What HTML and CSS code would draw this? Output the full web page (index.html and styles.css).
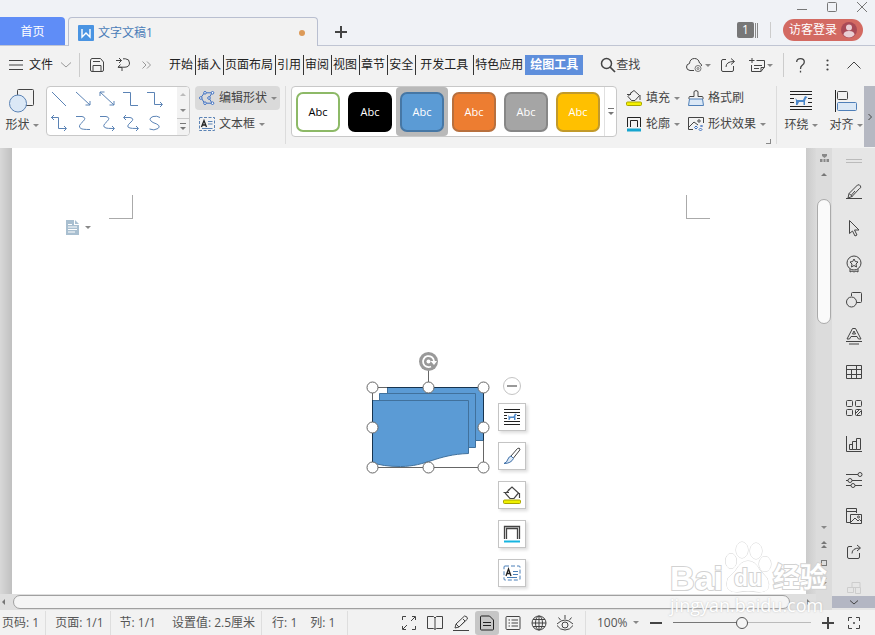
FILE: index.html
```html
<!DOCTYPE html>
<html lang="zh-CN">
<head>
<meta charset="utf-8">
<title>文字文稿1</title>
<link rel="stylesheet" href="styles.css">
</head>
<body>
<div class="app">

<header class="titlebar">
  <nav class="tabs">
    <button class="tab-home">首页</button>
    <button class="tab-doc">
      <svg class="logo" width="16" height="16" viewBox="0 0 16 16"><rect width="16" height="16" rx="1" fill="#4a94e2"/><path d="M4 4v8l4-4 4 4V4" fill="none" stroke="#fff" stroke-width="1.4"/></svg>
      <span>文字文稿1</span><i class="dot"></i>
    </button>
    <button class="new-tab" aria-label="新建"><svg width="12" height="12" viewBox="0 0 12 12"><path d="M6 0v12M0 6h12" stroke-width="2"/></svg></button>
  </nav>
  <div class="title-right">
    <div class="window-buttons">
      <button aria-label="最小化"><svg width="10" height="10" viewBox="0 0 10 10"><path d="M0 7.500h10"/></svg></button>
      <button aria-label="最大化"><svg width="10" height="10" viewBox="0 0 10 10"><rect x=".5" y=".5" width="9" height="9" rx="1"/></svg></button>
      <button aria-label="关闭"><svg width="10" height="10" viewBox="0 0 10 10"><path d="M0 0l10 10M10 0L0 10"/></svg></button>
    </div>
    <div class="account">
      <span class="count">1</span><i class="bars"></i><i class="sep"></i>
      <button class="login">访客登录
        <svg width="16" height="16" viewBox="0 0 16 16"><circle cx="8" cy="8" r="8" fill="#a94a56"/><circle cx="8" cy="5.500" r="3" fill="#e9cfd4"/><path d="M2.500 13q0-4 5.500-4t5.500 4q-5.500 5-11 0z" fill="#e9cfd4"/></svg>
      </button>
    </div>
  </div>
</header>

<div class="menubar">
  <button class="file"><svg width="14" height="10" viewBox="0 0 14 10"><path d="M0 .5h14M0 5h14M0 9.500h14"/></svg>文件<svg class="light" width="10" height="6" viewBox="0 0 10 6"><path d="M0 .5l5 4.500 5-4.500"/></svg></button>
  <i class="sep tall"></i>
  <div class="quick">
    <button aria-label="保存"><svg width="14" height="14" viewBox="0 0 14 14"><path d="M.5 3V12q0 1.500 1.500 1.500h10q1.500 0 1.500-1.500V4L10.500.5H2Q.5.5.5 3M3 13V7.500h8V13M3 3.500h7"/></svg></button>
    <button aria-label="撤销"><svg width="14" height="14" viewBox="0 0 14 14"><path d="M0 2.500h5.500M3 0l2.500 2.500L3 5M7 .8h2.500Q13.500 1 13.500 5T9 9.200H2M4.500 6.500L2 9.200l4 .3V13"/></svg></button>
    <button class="light" aria-label="更多"><svg width="9" height="8" viewBox="0 0 9 8"><path d="M.5.5L4 4 .5 7.500M5 .5L8.500 4 5 7.500"/></svg></button>
  </div>
  <nav class="menu">
    <button>开始</button><button>插入</button><button>页面布局</button><button>引用</button><button>审阅</button><button>视图</button><button>章节</button><button>安全</button><button class="dev">开发工具</button><button class="last">特色应用</button><button class="active">绘图工具</button>
  </nav>
  <button class="find"><svg width="16" height="16" viewBox="0 0 16 16"><circle cx="6.500" cy="6.500" r="5" stroke-width="1.500"/><path d="M10 10l5 5" stroke-width="1.700"/></svg>查找</button>
  <div class="menu-right">
    <button aria-label="云同步"><svg width="17" height="14" viewBox="0 0 17 14"><path d="M8 12.500H4Q.5 12 .5 9q0-3 3-3.500Q4 .5 8.500.5q4 0 5 4.500Q16 6 15.500 8"/><circle cx="12" cy="10.500" r="3" stroke="#777"/><circle cx="12" cy="10.500" r="1" stroke="#777"/></svg><i class="caret"></i></button>
    <button aria-label="分享"><svg width="14" height="14" viewBox="0 0 14 14"><path d="M5 1.500H2Q.5 1.500.5 3v9q0 1.500 1.500 1.500h9q1.500 0 1.500-1.500V8M5 9q0-5.500 8-5.500M10 .5l3.500 3L10 6.500"/></svg></button>
    <button class="note" aria-label="批注"><svg width="16" height="14" viewBox="0 0 16 14"><path d="M3 0v5M0 2.500h5.500M7.500 2.500H15.500V9L12 13.500H2.500V7M5 7.500h8M5 10.500h5M15.500 9.500H12v4"/></svg><i class="caret"></i></button>
    <i class="sep tall"></i>
    <button class="help" aria-label="帮助"><svg width="9" height="15" viewBox="0 0 9 15"><path d="M.7 4Q.7.7 4.500.7T8.300 4Q8.300 6 6 7.500 4.500 8.500 4.500 11M4.500 12.800v1.700" stroke-width="1.300"/></svg></button>
    <button aria-label="更多选项"><svg width="3" height="12" viewBox="0 0 3 12" class="solid"><circle cx="1.500" cy="1.500" r="1.100"/><circle cx="1.500" cy="6" r="1.100"/><circle cx="1.500" cy="10.500" r="1.100"/></svg></button>
    <button aria-label="收起"><svg width="14" height="8" viewBox="0 0 14 8"><path d="M.5 7.500L7 1l6.500 6.500"/></svg></button>
  </div>
</div>

<section class="ribbon">
  <button class="big">
    <svg width="26" height="24" viewBox="0 0 26 24"><rect x="8.500" y=".5" width="16" height="16" rx="1"/><circle cx="9" cy="14.500" r="8.500" fill="#dbe8f6" stroke="#5b83b5"/></svg>
    <span>形状<i class="caret"></i></span>
  </button>
  <div class="lines">
    <div class="line-grid">
      <button aria-label="直线"><svg width="16" height="16" viewBox="0 0 16 16"><path d="M1 1l14 14"/></svg></button>
      <button aria-label="箭头"><svg width="16" height="16" viewBox="0 0 16 16"><path d="M1 1l14 13M15 10v4h-4.500"/></svg></button>
      <button aria-label="双箭头"><svg width="16" height="16" viewBox="0 0 16 16"><path d="M1 1l14 13M15 10v4h-4.500M1 5V1h4.500"/></svg></button>
      <button aria-label="肘形"><svg width="16" height="16" viewBox="0 0 16 16"><path d="M0 1.500h7.500v13H15"/></svg></button>
      <button aria-label="肘形箭头"><svg width="16" height="16" viewBox="0 0 16 16"><path d="M0 1.500h7.500v12H15M13 11l2.500 2.500L13 16"/></svg></button>
      <button aria-label="肘形双箭头"><svg width="16" height="16" viewBox="0 0 16 16"><path d="M0 2.500h7.500v11H15M13 11l2.500 2.500L13 16M3 0L.5 2.500 3 5"/></svg></button>
      <button aria-label="曲线"><svg width="16" height="16" viewBox="0 0 16 16"><path d="M1 1.500h6q5 1 1 5-6 5-2 7 1 1 9 1"/></svg></button>
      <button aria-label="曲线箭头"><svg width="16" height="16" viewBox="0 0 16 16"><path d="M1 1.500h6q5 1 1 5-6 5-1 6.500 1 .5 8 .5M13 11l2.500 2.500L13 16"/></svg></button>
      <button aria-label="曲线双箭头"><svg width="16" height="16" viewBox="0 0 16 16"><path d="M1 2.500h6q5 1 1 4.500-6 5-1 6 1 .5 8 .5M13 11l2.500 2.500L13 16M3 0L.5 2.500 3 5"/></svg></button>
      <button aria-label="自由曲线"><svg width="16" height="16" viewBox="0 0 16 16"><path d="M13 2.500Q10 .5 6 1.500 0 4 6 7.500q9 3 5 6-4 2.500-8.500.5"/></svg></button>
    </div>
    <div class="spin"><button aria-label="上一行"><i class="caret up pale"></i></button><button aria-label="下一行"><i class="caret"></i></button><button aria-label="展开"><i class="expand"></i></button></div>
  </div>
  <div class="stack edit">
    <button class="cmd on"><svg width="16" height="14" viewBox="0 0 16 14"><path d="M6 1L2 6.500 6 13M6 1.800h7L10 7l3 5.200H6" stroke="#3d6fc0"/><g fill="#fff" stroke="#3d6fc0"><circle cx="6" cy="1.800" r="1.300"/><circle cx="1.800" cy="7" r="1.300"/><circle cx="6" cy="12.200" r="1.300"/><circle cx="13.500" cy="1.800" r="1.300"/><circle cx="10" cy="7" r="1.300"/><circle cx="13.500" cy="12.200" r="1.300"/></g></svg>编辑形状<i class="caret"></i></button>
    <button class="cmd"><svg width="16" height="14" viewBox="0 0 16 14"><rect x=".5" y=".5" width="15" height="13" stroke="#5b83b5" stroke-dasharray="3 1.500"/><path d="M2.500 10L5 3.500 7.500 10M3.500 8h3" stroke="#222" stroke-width="1.300"/><path d="M9 4.500h4.500M9 7h4.500M3 11.500h10.500" stroke="#5b83b5"/></svg>文本框<i class="caret"></i></button>
  </div>
  <i class="rule"></i>
  <div class="styles">
    <button class="cell"><span class="swatch white">Abc</span></button>
    <button class="cell"><span class="swatch black">Abc</span></button>
    <button class="cell sel"><span class="swatch blue">Abc</span></button>
    <button class="cell"><span class="swatch orange">Abc</span></button>
    <button class="cell"><span class="swatch gray">Abc</span></button>
    <button class="cell"><span class="swatch gold">Abc</span></button>
    <button class="style-more" aria-label="更多样式"><i class="expand"></i></button>
  </div>
  <div class="stack fill">
    <button class="cmd"><svg width="16" height="16" viewBox="0 0 16 16"><path d="M4 3.500L8 .5l5.500 5L9 10.500H5.500L2 6.500 6 2M1 4.500h4M14 5v5"/><rect x=".5" y="12" width="15" height="3.500" rx="1" fill="#f4f000" stroke="#a8a400"/></svg>填充<i class="caret"></i></button>
    <button class="cmd"><svg width="16" height="16" viewBox="0 0 16 16"><path d="M1.500 11V1.500h13V11M4.500 11V4.500h7V11" stroke="#222"/><path d="M1 14h14" stroke="#16a5cf" stroke-width="3"/></svg>轮廓<i class="caret"></i></button>
  </div>
  <div class="stack effect">
    <button class="cmd"><svg width="16" height="16" viewBox="0 0 16 16"><path d="M1 9V7.500q0-1 1-1h4V1.500Q8-.5 10 1.500v5h4q1 0 1 1V9"/><path d="M1.500 9h13l1 6.500H.5z" fill="#dbe8f6" stroke="#4f7fb8"/></svg>格式刷</button>
    <button class="cmd"><svg width="16" height="16" viewBox="0 0 16 16"><path d="M5 13.500H.5V1.500h15V7M1 11l5-5 4 3"/><circle cx="11" cy="5" r="1.200"/><g stroke="#3d6fc0"><path d="M8 10l1.500 1.500L8 13l-1.500-1.500zM13.500 9l1 1-1 1-1-1zM12.500 12l1.500 1.500-1.500 1.500L11 13.500z"/></g></svg>形状效果<i class="caret"></i></button>
  </div>
  <button class="launcher" aria-label="形状格式"></button>
  <i class="rule end"></i>
  <button class="big wrap">
    <svg width="24" height="24" viewBox="0 0 24 24"><path d="M1 2.500h22M1 5.500h22M1 9.500h4M19 9.500h4M1 13.500h4M19 13.500h4M1 17.500h22M1 20.500h22" stroke="#222"/><path d="M6.500 9l1.500 2h6l2-4 2.500 1-1.500 1.500-1 2.500v4h-1.500v-3H10L8.500 16H7v-4z" fill="#4a86c8" stroke="none"/></svg>
    <span>环绕<i class="caret"></i></span>
  </button>
  <button class="big align">
    <svg width="24" height="24" viewBox="0 0 24 24"><path d="M1.500 1v22" stroke="#222"/><rect x="3.500" y="2.500" width="10" height="8" rx="1"/><rect x="3.500" y="13.500" width="19" height="8" rx="1" fill="#dbe8f6" stroke="#4f7fb8"/></svg>
    <span>对齐<i class="caret"></i></span>
  </button>
  <button class="ribbon-next" aria-label="向右滚动"><svg width="4" height="8" viewBox="0 0 4 8"><path d="M.5 1L3.500 4 .5 7"/></svg></button>
</section>

<main class="work">
  <div class="editor">
    <div class="view">
      <article class="page">
        <div class="margins"><i class="mark left"></i><i class="mark right"></i></div>
        <button class="doc-tag" aria-label="段落布局"><svg width="14" height="15" viewBox="0 0 14 15"><path d="M0 0h8v5h5v10H0zM9 0l4 4H9z" fill="#a9bfd0"/><path d="M2 4.500h4M2 7h9M2 9.500h9M2 12h7" stroke="#fff"/></svg><i class="caret"></i></button>
        <svg class="shape" width="126" height="126" viewBox="0 0 126 126">
          <g fill="#5b9bd5" stroke="#41719c">
            <path d="M22.500 37.500h96v53h-16v-40h-80z"/>
            <path d="M14.500 43.500h96v54h-16v-40h-80z"/>
            <path d="M7.500 50.500h96v53c-32 1-42 13-68 13q-18 0-28-4z"/>
          </g>
          <path d="M7.500 37.500h111v80H7.500zM63.500 20v17" fill="none" stroke="#666"/>
          <path d="M22 37.500h96.500v53M7.500 50v62" fill="none" stroke="#17344f"/>
          <g fill="#fff" stroke="#666"><circle cx="7.500" cy="37.500" r="5.500"/><circle cx="63.500" cy="37.500" r="5.500"/><circle cx="118.500" cy="37.500" r="5.500"/><circle cx="7.500" cy="77.500" r="5.500"/><circle cx="118.500" cy="77.500" r="5.500"/><circle cx="7.500" cy="117.500" r="5.500"/><circle cx="63.500" cy="117.500" r="5.500"/><circle cx="118.500" cy="117.500" r="5.500"/></g>
          <g stroke="none"><circle cx="63.500" cy="11.500" r="9.500" fill="#999"/><circle cx="63.500" cy="11.500" r="2" fill="#fff"/><path d="M66 16.500A5.500 5.500 0 1 1 69 11" fill="none" stroke="#fff" stroke-width="1.800"/><path d="M65.500 11h6.500l-3 4z" fill="#fff"/></g>
        </svg>
        <div class="float">
          <button class="round" aria-label="收起工具"><svg width="10" height="2" viewBox="0 0 10 2"><path d="M0 1h10" stroke="#777" stroke-width="1.500"/></svg></button>
          <button aria-label="环绕方式"><svg width="18" height="18" viewBox="0 0 18 18"><path d="M1 1.500h16M1 4.500h16M1 7.500h3M14 7.500h3M1 10.500h3M14 10.500h3M1 13.500h16M1 16.500h16" stroke="#222"/><path d="M5 7l1.500 1.500h4L12 5.500l2 1-1.500 1V12H11v-2H7.500L6.500 12H5.500V9z" fill="#4a86c8" stroke="none"/></svg></button>
          <button aria-label="画笔"><svg width="18" height="18" viewBox="0 0 18 18"><path d="M8 9l6.500-7.500q2-1 2.500.5 0 1-1 2L10.500 11"/><path d="M8 9l2.500 2.500Q8 16.500 1 16.500q3-1 4-4.500Q6 9.500 8 9z" fill="#dbe8f6" stroke="#3d6fa8"/></svg></button>
          <button aria-label="填充"><svg width="18" height="18" viewBox="0 0 18 18"><path d="M5 4.500L9 1l6.500 6L11 12.500H7L2.500 7.500 7 3M.5 6.500H6M16.500 7v5" stroke-width="1.200"/><rect x=".5" y="14" width="17" height="3.500" rx="1" fill="#eef000" stroke="#a8a400"/></svg></button>
          <button aria-label="轮廓"><svg width="18" height="18" viewBox="0 0 18 18"><path d="M1.500 14V1.500h15V14M3.500 14V3.500h11V14" stroke-width="1.300"/><path d="M1 16.500h16" stroke="#16b5e0" stroke-width="2"/></svg></button>
          <button aria-label="文本框"><svg width="18" height="16" viewBox="0 0 18 16"><rect x="1" y="1" width="16" height="14" rx="1" stroke="#4a7fb8" stroke-dasharray="4 2"/><path d="M3 11l2.500-7L8 11M4 8.500h3" stroke="#222" stroke-width="1.300"/><path d="M10 6.500h5M10 9.500h5M4 12.500h10" stroke="#4a7fb8"/></svg></button>
        </div>
      </article>
    </div>
    <div class="hscroll"><i class="tri west"></i><i class="thumb"></i><i class="tri east"></i></div>
  </div>
  <div class="vscroll">
    <svg width="9" height="9" viewBox="0 0 9 9"><path d="M2 0h5v2L4.500 4 2 2zM0 5h2.500v3H0zM3.500 5h2v3h-2zM6.500 5H9v3H6.500z" fill="#888" stroke="none"/></svg>
    <i class="caret up"></i>
    <i class="vthumb"></i>
    <div class="vbottom"><i class="caret"></i><div><i class="caret up"></i><i class="caret up"></i></div><i class="ball"></i><div><i class="caret"></i><i class="caret"></i></div></div>
  </div>
  <aside class="side">
    <i class="grip"></i>
    <div class="tools">
      <button aria-label="样式"><svg width="18" height="18" viewBox="0 0 18 18"><path d="M1 15.500h16M3 15l1-4.500L12.500 2q2-1 3 1t-1 2.500L7 13.500zM4 10.500l3.500 3M10 8l-3.500 4"/></svg></button>
      <button aria-label="选择"><svg width="18" height="18" viewBox="0 0 18 18"><path d="M4.500 1.500v13l3-2.500 2.500 5 2-1-2.500-5h4.500z"/></svg></button>
      <button aria-label="推荐"><svg width="18" height="18" viewBox="0 0 18 18"><circle cx="9" cy="8" r="7"/><path d="M9 4l1.300 2.500 2.700.5-2 2 .5 3L9 10.500 6.500 12l.5-3-2-2 2.700-.5zM5 14v3l2-1 2 1 2-1 2 1v-3"/></svg></button>
      <button aria-label="形状"><svg width="18" height="18" viewBox="0 0 18 18"><path d="M6.500 5V2.500q0-1 1-1h8q1 0 1 1v8q0 1-1 1H12"/><circle cx="6.500" cy="11" r="5"/></svg></button>
      <button aria-label="艺术字"><svg width="18" height="18" viewBox="0 0 18 18"><path d="M2 12L7.500 1.500h3L16 12h-2.500L12 9.500H6L4.500 12zM7.500 7L9 4l1.500 3zM1 14.500h16M4 17h10"/></svg></button>
      <button aria-label="表格"><svg width="18" height="18" viewBox="0 0 18 18"><path d="M1.500 2.500h15v13h-15zM1.500 6.500h15M1.500 11.500h15M6.500 6v9M11.500 2v13"/></svg></button>
      <button aria-label="模板"><svg width="18" height="18" viewBox="0 0 18 18"><rect x="1.500" y="1.500" width="6" height="6" rx="1"/><rect x="10.500" y="1.500" width="6" height="6" rx="1"/><rect x="1.500" y="10.500" width="6" height="6" rx="1"/><rect x="10.500" y="10.500" width="6" height="6" rx="1"/><path d="M11 14l3-3M12 16l4-4"/></svg></button>
      <button aria-label="图表"><svg width="18" height="18" viewBox="0 0 18 18"><path d="M1.500 1v15.500H17M4.500 14.500v-5h3v5zM7.500 14.500v-8h4v8zM11.500 14.500v-11h4v11z"/></svg></button>
      <button aria-label="设置"><svg width="18" height="18" viewBox="0 0 18 18"><path d="M1 3.500h12M1 9.500h2M7 9.500h10M1 14.500h5M10 14.500h7"/><circle cx="15" cy="3.500" r="2"/><circle cx="5" cy="9.500" r="2"/><circle cx="8" cy="14.500" r="2"/></svg></button>
      <button aria-label="图片"><svg width="18" height="18" viewBox="0 0 18 18"><path d="M5 15.500H1.500v-14h10V6M1.500 4.500h10M5.500 7.500h11v9h-11zM6 15l4-4 3 3 1.500-1.500L16 14"/><circle cx="13.500" cy="10" r="1"/></svg></button>
      <button aria-label="分享"><svg width="18" height="18" viewBox="0 0 18 18"><path d="M7 3.500H4Q2.500 3.500 2.500 5v9q0 1.500 1.500 1.500h9q1.500 0 1.500-1.500v-4M7 10.500Q7 5 15 5M12 2l3.500 3L12 8"/></svg></button>
      <button class="faint" aria-label="更多工具"><svg width="18" height="18" viewBox="0 0 18 18"><path d="M7 3.500h8v5H7zM2.500 8.500h6v5h-6zM10.500 8.500h5v6h-5z"/></svg></button>
    </div>
    <button class="side-down" aria-label="向下滚动"><svg width="8" height="5" viewBox="0 0 8 5"><path d="M0 .5L4 4 8 .5"/></svg></button>
  </aside>
</main>

<footer class="status">
  <div class="info"><span class="f">页码: 1</span><span>页面: 1/1</span><span class="pair"><b>节: 1/1</b><b>设置值: 2.5厘米</b></span><span class="pair near"><b>行: 1</b><b>列: 1</b></span></div>
  <div class="views">
    <button aria-label="全屏"><svg width="16" height="16" viewBox="0 0 16 16"><path d="M1.500 5V1.500H5M11 1.500h3.500V5M14.500 11v3.500H11M5 14.500H1.500V11M10 6l4-4M6 10l-4 4"/></svg></button>
    <button aria-label="阅读"><svg width="16" height="16" viewBox="0 0 16 16"><path d="M.5 1.500h6L8 3l1.500-1.500h6v12h-6L8 14.500l-1.500-1h-6zM8 3v11"/></svg></button>
    <button aria-label="写作"><svg width="16" height="16" viewBox="0 0 16 16"><path d="M0 15.500h16M2 13l1-4 8.500-8q3 0 3 3L6 12zM3 9l3 3M10 4l2 2-4 4"/></svg></button>
    <button class="on" aria-label="页面"><svg width="16" height="16" viewBox="0 0 16 16"><path d="M1.500 2q0-1 1-1h8l4 4v9q0 1-1 1h-11q-1 0-1-1zM4 7.500h8M4 10.500h8" stroke="#222"/></svg></button>
    <button aria-label="大纲"><svg width="16" height="16" viewBox="0 0 16 16"><rect x="1" y="1.500" width="14" height="13" rx="1"/><path d="M3.500 5h1.500M6.500 5H13M3.500 8h1.500M6.500 8H13M3.500 11h1.500M6.500 11H13"/></svg></button>
    <button aria-label="网页"><svg width="16" height="16" viewBox="0 0 16 16"><circle cx="8" cy="8" r="7"/><ellipse cx="8" cy="8" rx="3.500" ry="7"/><path d="M1 8h14M2 4.500h12M2 11.500h12M8 1v14"/></svg></button>
    <button aria-label="护眼"><svg width="18" height="16" viewBox="0 0 18 16"><path d="M1 9q8-8 16 0M1 10.500q3 4.500 8 4.500t8-4.500M9 4V0M4.500 5L2.500 2.500M13.500 5l2-2.500"/><circle cx="9" cy="10" r="3"/></svg></button>
  </div>
  <div class="zoom">
    <label><select aria-label="显示比例"><option>100%</option></select><i class="caret"></i></label>
    <button aria-label="缩小"><svg width="12" height="12" viewBox="0 0 12 12"><path d="M0 6h12" stroke-width="2"/></svg></button>
    <input type="range" min="0" max="100" value="50" aria-label="缩放">
    <button aria-label="放大"><svg width="12" height="12" viewBox="0 0 12 12"><path d="M0 6h12M6 0v12" stroke-width="2"/></svg></button>
    <button class="fit" aria-label="适应窗口"><svg width="14" height="14" viewBox="0 0 14 14"><path d="M1.500 5V1.500H5M9 1.500h3.500V5M12.500 9v3.500H9M5 12.500H1.500V9"/><circle cx="7" cy="7" r="1" fill="#444" stroke="none"/></svg></button>
  </div>
</footer>

<div class="watermark">
  <div class="brand"><span>Bai</span>
    <div class="paw"><svg width="50" height="54" viewBox="0 0 50 54"><g fill="#fff" stroke="#d2d2d2"><ellipse cx="8" cy="20" rx="5.500" ry="7.500"/><ellipse cx="19" cy="9" rx="6" ry="8"/><ellipse cx="33" cy="10" rx="6" ry="8"/><ellipse cx="42" cy="23" rx="6" ry="7.500"/><path d="M25 20q7 0 11 8l8 9q6 14-8 14-11-2-22 0-14 0-9-14l8-8q5-9 12-9z"/></g></svg><span>du</span></div>
    <span class="cn">经验</span></div>
  <div class="url">jingyan.baidu.com</div>
</div>
</div>
</body>
</html>
```
FILE: styles.css
```css
* { box-sizing: border-box; }
body {
  margin: 0;
  font: 12px/16px "Open Sans", "Noto Sans CJK SC", sans-serif;
  color: #444;
  background: #f2f2f2;
}
button, select {
  font: inherit;
  color: inherit;
  background: none;
  border: 0;
  padding: 0;
  margin: 0;
  white-space: nowrap;
}
button { display: flex; align-items: center; justify-content: center; flex: none; }
svg { display: block; flex: none; fill: none; stroke: #444; }
.logo, .doc-tag svg, .login svg { stroke: none; }
.solid { fill: #444; stroke: none; }
.light svg, svg.light { stroke: #999; }
i { display: block; flex: none; }
.app { position: relative; height: 100vh; display: flex; flex-direction: column; overflow: hidden; }

.caret { width: 0; height: 0; border: 3px solid transparent; border-top-color: #888; border-bottom: 0; }
.caret.up { border-top: 0; border-bottom: 3px solid #777; }
.caret.up.pale { border-bottom-color: #bbb; }
.expand { width: 6px; height: 8px; border-top: 1px solid #777; padding-top: 3px; }
.expand::after { content: ""; display: block; border: 3px solid transparent; border-top-color: #777; border-bottom: 0; }
.sep { width: 1px; height: 16px; background: #ccc; }
.sep.tall { height: 24px; }

/* Title bar */
.titlebar { display: flex; justify-content: space-between; height: 46px; background: #f0f2f6; box-shadow: inset 0 -1px #c0c5d3; }
.tabs { display: flex; align-items: flex-start; padding-top: 17px; }
.tab-home { width: 65px; height: 28px; padding-top: 2px; background: #5f8df7; color: #fff; border-radius: 0 4px 0 0; }
.tab-doc { width: 250px; height: 29px; margin-left: 3px; padding: 2px 12px 0 9px; gap: 4px; background: #f2f2f2; border: 1px solid #b9bfd0; border-bottom: 0; border-radius: 4px 4px 0 0; color: #4a7cb8; }
.dot { width: 6px; height: 6px; margin-left: auto; border-radius: 50%; background: #dc9a58; }
.new-tab { width: 46px; height: 30px; }
.title-right { display: flex; flex-direction: column; align-items: flex-end; }
.window-buttons { display: flex; gap: 20px; height: 14px; padding-right: 8px; }
.window-buttons svg { stroke: #777; }
.account { display: flex; align-items: center; height: 32px; padding-right: 12px; }
.count { width: 17px; height: 16px; background: #777; color: #fff; text-align: center; border-radius: 2px; }
.bars { width: 3px; height: 15px; margin-left: 1px; border: 1px solid #888; border-width: 0 1px; }
.account .sep { margin: 0 12px; }
.login { width: 80px; height: 22px; gap: 4px; border-radius: 11px; background: #d36a62; color: #fff; }

/* Menu bar */
.menubar { display: flex; align-items: center; height: 38px; padding: 0 14px 0 9px; }
.file { gap: 6px; color: #222; }
.file svg.light { margin-left: 2px; }
.menubar > .sep { margin-left: 8px; }
.quick { display: flex; align-items: center; gap: 12px; margin-left: 10px; }
.menu { display: flex; margin-left: 17px; color: #222; }
.menu button { height: 20px; padding: 0 2px 0 1px; border-right: 1px solid #333; }
.menu .dev { padding: 0 5px 0 4px; }
.menu .last { border: 0; }
.menu .active { padding: 0 5px; border: 0; background: #5f8fdc; color: #fff; font-weight: bold; }
.find { margin-left: 17px; color: #444; }
.menu-right { display: flex; align-items: center; gap: 10px; margin-left: auto; }
.menu-right button { gap: 2px; }
.menu-right .note { margin-left: 4px; }
.menu-right .help { margin: 0 11px 0 2px; }
.menu-right button:last-child { margin-left: 8px; }

/* Ribbon */
.ribbon { display: flex; align-items: flex-start; height: 64px; padding-top: 2px; }
.big { flex-direction: column; gap: 4px; width: 40px; padding: 3px 0 0 4px; }
.big span { display: flex; align-items: center; gap: 3px; }
.lines { display: flex; flex: none; width: 144px; height: 50px; margin-left: 6px; border: 1px solid #c8c8c8; border-radius: 4px; background: #fff; overflow: hidden; }
.line-grid { flex: 1; display: grid; grid-template-columns: repeat(5, 24px); }
.line-grid svg { stroke: #5b83b5; }
.spin { display: flex; flex-direction: column; width: 12px; background: #f2f2f2; }
.spin button { flex: 1; }
.spin button:last-child { border-top: 1px solid #c8c8c8; }
.stack { display: flex; flex-direction: column; gap: 2px; }
.cmd { justify-content: flex-start; gap: 4px; height: 24px; }
.edit { margin-left: 5px; }
.edit .cmd { width: 85px; padding-left: 4px; border-radius: 4px; }
.edit .on { background: #dadada; }
.rule { width: 1px; height: 58px; margin: 0 5px; background: #dcdcdc; }
.rule.end { margin: 0 2px 0 5px; }
.styles { display: flex; height: 51px; border: 1px solid #c8c8c8; border-radius: 4px; background: #fff; }
.cell { width: 52px; border-radius: 4px; }
.sel { background: #b9b9b9; }
.swatch { display: flex; align-items: center; justify-content: center; width: 44px; height: 40px; border: 2px solid; border-radius: 7px; font-size: 11px; color: #fff; }
.white { color: #000; border-color: #8db967; }
.black { background: #000; border-color: #000; }
.blue { background: #5b9bd5; border-color: #4677a5; }
.orange { background: #ed7d31; border-color: #b8703e; }
.gray { background: #a5a5a5; border-color: #878787; }
.gold { background: #ffc000; border-color: #c29a2a; }
.style-more { width: 12px; border-left: 1px solid #e0e0e0; }
.fill { margin-left: 9px; }
.effect { margin-left: 8px; }
.launcher { width: 5px; height: 5px; margin-top: 53px; border: 1px solid #888; border-width: 0 1px 1px 0; }
.align { margin-left: 5px; }
.ribbon-next { width: 12px; height: 61px; margin-left: auto; background: #b5b8c2; }

/* Workspace */
.work { flex: 1; display: flex; min-height: 0; }
.editor { flex: 1; display: flex; flex-direction: column; min-width: 0; }
.view { flex: 1; display: flex; padding: 0 10px 0 12px; background: linear-gradient(90deg, #d8d8d8, #c0c0c0 12px, #cbcbcb calc(100% - 10px), #dadada); }
.page { position: relative; flex: 1; padding: 47px 96px 47px 97px; background: #fff; }
.margins { display: flex; justify-content: space-between; }
.mark { width: 24px; height: 24px; border: 0 solid #aaa; border-bottom-width: 1px; }
.mark.left { border-right-width: 1px; }
.mark.right { border-left-width: 1px; }
.doc-tag { position: absolute; left: 54px; top: 72px; gap: 5px; }
.shape { position: absolute; left: 353px; top: 202px; }
.float { position: absolute; left: 486px; top: 229px; display: flex; flex-direction: column; align-items: center; gap: 11px; }
.float button { width: 28px; height: 28px; border: 1px solid #c4c4c4; background: #fff; box-shadow: 2px 2px 3px #ddd; }
.float .round { width: 18px; height: 18px; margin-bottom: -3px; border-radius: 50%; box-shadow: none; }
.hscroll { display: flex; align-items: center; height: 16px; padding: 0 6px 0 2px; background: #dfdfdf; }
.tri { border: 3px solid transparent; }
.west { border-right-color: #777; border-left: 0; }
.east { border-left-color: #777; border-right: 0; }
.thumb { flex: 1; height: 14px; margin: 0 17px 0 8px; border: 1px solid #a0a0a0; border-radius: 7px; background: #f5f5f5; }
.vscroll { display: flex; flex-direction: column; align-items: center; width: 16px; padding: 6px 0 25px; background: #dcdcdc; }
.vscroll > .caret { margin: 10px 0 23px; }
.vthumb { width: 14px; height: 125px; border: 1px solid #aaa; border-radius: 7px; background: #fafafa; }
.vbottom { display: flex; flex-direction: column; align-items: center; gap: 12px; margin-top: auto; }
.vbottom div { display: flex; flex-direction: column; gap: 1px; }
.ball { width: 6px; height: 6px; border: 1px solid #777; }
.side { display: flex; flex-direction: column; align-items: center; width: 43px; padding: 11px 0 2px; background: #e6e6e6; }
.grip { width: 16px; height: 4px; border: 1px solid #bbb; border-width: 1px 0; }
.tools { flex: 1; min-height: 0; overflow: hidden; padding-top: 11px; }
.tools button { width: 43px; height: 36px; }
.faint { opacity: .15; }
.side-down { width: 100%; height: 12px; background: #b3b6c3; }

/* Status bar */
.status { display: flex; align-items: center; height: 25px; color: #555; }
.info { display: flex; align-items: center; }
.info > span { padding: 4px 6px 4px 9px; border-right: 1px solid #dedede; }
.info .f { padding-left: 2px; }
.info .pair { display: flex; gap: 16px; }
.info .near { gap: 13px; padding: 4px 12px 4px 10px; }
b { font-weight: normal; }
.views { display: flex; margin-left: auto; padding-right: 7px; border-right: 1px solid #dedede; }
.views button { width: 24px; height: 24px; margin: 0 1px; border-radius: 3px; }
.views .on { background: #c6c6c6; }
.zoom { display: flex; align-items: center; gap: 11px; padding: 0 14px 0 11px; }
.zoom label { display: flex; align-items: center; gap: 3px; }
.zoom select { appearance: none; width: 33px; outline: 0; }
.zoom input { appearance: none; width: 138px; height: 14px; margin: 0; background: linear-gradient(90deg, #777 50%, #bbb 50%) center / 100% 1px no-repeat; }
.zoom input::-webkit-slider-thumb { appearance: none; width: 12px; height: 12px; border: 1px solid #555; border-radius: 50%; background: #f5f5f5; }
.fit { margin-left: 2px; }

/* Watermark over the lower right corner */
.watermark { position: absolute; right: 48px; bottom: 20px; pointer-events: none; color: #fff; -webkit-text-stroke: 2px #d2d2d2; paint-order: stroke fill; }
.brand { display: flex; align-items: flex-end; font: bold 34px/34px "Liberation Sans", "Noto Sans CJK SC", sans-serif; }
.paw { position: relative; }
.paw span { position: absolute; left: 11px; bottom: 0; font-size: 23px; }
.cn { font-size: 27px; }
.url { font: 18px/20px "Open Sans", sans-serif; -webkit-text-stroke: 0; text-shadow: 0 0 2px #bbb; }
```
